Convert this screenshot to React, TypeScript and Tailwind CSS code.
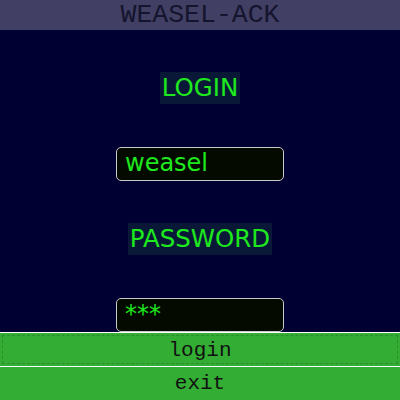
import React from "react";

export default function App() {
  return (
    <div className="w-[400px] h-[400px] flex flex-col bg-[#000033] overflow-hidden">
      <div
        className="h-[30px] bg-[#413f63] text-[#14142e] text-[26.5px] leading-[30px] text-center tracking-normal"
        style={{ fontFamily: '"Liberation Mono", monospace' }}
      >
        WEASEL-ACK
      </div>
      <div
        className="flex-1 flex flex-col items-center pt-[42px]"
        style={{ fontFamily: '"DejaVu Sans", sans-serif' }}
      >
        <div className="bg-[#0a1838] text-[#1ee81e] text-[24.5px] leading-[28px] px-[2px] py-[2px]">
          LOGIN
        </div>
        <div className="mt-[43px] w-[168px] h-[34px] rounded-[5px] border border-[#c8c8c8] bg-[#050a00] text-[#1ee81e] text-[24px] leading-[30px] pl-[8px]">
          weasel
        </div>
        <div className="mt-[42px] bg-[#0a1838] text-[#1ee81e] text-[24.5px] leading-[28px] px-[2px] py-[2px]">
          PASSWORD
        </div>
        <div className="mt-[43px] w-[168px] h-[34px] rounded-[5px] border border-[#c8c8c8] bg-[#050a00] text-[#1ee81e] text-[24px] leading-[30px] pl-[8px]">
          ***
        </div>
      </div>
      <div style={{ fontFamily: '"Liberation Mono", monospace' }}>
        <div className="h-[34px] border-t border-white bg-[#33ad33] p-[2px]">
          <div className="h-full border border-dashed border-[#2a8f2a] text-[#111] text-[21px] leading-[29px] text-center">
            login
          </div>
        </div>
        <div className="h-[34px] border-t border-white bg-[#33ad33] text-[#111] text-[21px] leading-[33px] text-center">
          exit
        </div>
      </div>
    </div>
  );
}
